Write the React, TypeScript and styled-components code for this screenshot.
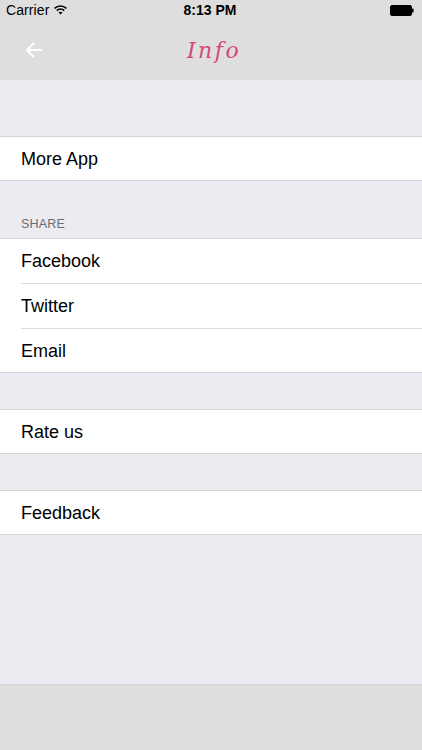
import React from "react";
import styled, { createGlobalStyle } from "styled-components";

const Global = createGlobalStyle`
  html, body { margin: 0; padding: 0; }
  body { font-family: "Liberation Sans", Arial, sans-serif; background: #ebebf1; }
  * { box-sizing: border-box; }
`;

const Screen = styled.div`
  width: 422px;
  height: 750px;
  display: flex;
  flex-direction: column;
  background: #ebebf1;
  overflow: hidden;
`;

const Header = styled.div`
  background: #dedede;
  display: flex;
  flex-direction: column;
`;

const StatusBar = styled.div`
  height: 20px;
  display: grid;
  grid-template-columns: 1fr auto 1fr;
  align-items: center;
  padding: 0 8px 0 6px;
  font-size: 14px;
  color: #000;
`;

const StatusLeft = styled.div`
  display: flex;
  align-items: center;
  gap: 5px;
  letter-spacing: 0.1px;
`;

const Time = styled.div`
  font-weight: bold;
  font-size: 14px;
`;

const StatusRight = styled.div`
  display: flex;
  justify-content: flex-end;
  align-items: center;
`;

const NavBar = styled.div`
  height: 60px;
  display: grid;
  grid-template-columns: 60px 1fr 60px;
  align-items: center;
`;

const BackButton = styled.div`
  display: flex;
  align-items: center;
  padding-left: 25px;
  height: 100%;
`;

const Title = styled.div`
  text-align: center;
  font-family: "DejaVu Serif", "Liberation Serif", serif;
  font-style: italic;
  font-size: 22px;
  letter-spacing: 2.5px;
  color: #d8477c;
  padding-left: 6px;
  padding-top: 1px;
`;

const Content = styled.div`
  flex: 1;
  display: flex;
  flex-direction: column;
`;

const Spacer = styled.div<{ $h: number }>`
  height: ${(p) => p.$h}px;
`;

const SectionHeader = styled.div`
  height: 57px;
  display: flex;
  align-items: flex-end;
  padding: 0 0 7px 21px;
  font-size: 12.5px;
  color: #6d6d72;
  letter-spacing: 0.2px;
`;

const Group = styled.div`
  background: #fff;
  border-top: 1px solid #d6d6da;
  border-bottom: 1px solid #d6d6da;
`;

const Row = styled.div`
  padding-left: 21px;
  background: #fff;
`;

const RowInner = styled.div<{ $divider?: boolean }>`
  height: ${(p) => (p.$divider ? 45 : 43)}px;
  display: flex;
  align-items: center;
  padding-top: ${(p) => (p.$divider ? 0 : 1)}px;
  font-size: 18px;
  color: #000;
  border-bottom: ${(p) => (p.$divider ? "1px solid #dcdce0" : "none")};
`;

const BottomBar = styled.div`
  height: 66px;
  background: #dedede;
  border-top: 1px solid #d8d8d8;
`;

const Wifi = () => (
  <svg width="13" height="10" viewBox="0 0 13 10">
    <path d="M0.6 3.4 A8.5 8.5 0 0 1 12.4 3.4" stroke="#000" strokeWidth="1.7" fill="none" />
    <path d="M2.8 5.6 A5.4 5.4 0 0 1 10.2 5.6" stroke="#000" strokeWidth="1.7" fill="none" />
    <path d="M6.5 9.6 L4.5 7.6 A2.9 2.9 0 0 1 8.5 7.6 Z" fill="#000" />
  </svg>
);

const Battery = () => (
  <svg width="24" height="11" viewBox="0 0 24 11">
    <rect x="0.5" y="0.5" width="21" height="10" rx="1.5" fill="#000" stroke="#000" />
    <rect x="22" y="3.5" width="1.6" height="4" rx="0.5" fill="#000" />
  </svg>
);

const BackArrow = () => (
  <svg width="17" height="16" viewBox="0 0 17 16">
    <path d="M16 8 H2 M8.5 1.5 L2 8 L8.5 14.5" stroke="#fff" strokeWidth="2" fill="none" strokeLinecap="round" strokeLinejoin="round" />
  </svg>
);

const Item = ({ label, divider }: { label: string; divider?: boolean }) => (
  <Row>
    <RowInner $divider={divider}>{label}</RowInner>
  </Row>
);

export default function App() {
  return (
    <>
      <Global />
      <Screen>
        <Header>
          <StatusBar>
            <StatusLeft>
              <span>Carrier</span>
              <Wifi />
            </StatusLeft>
            <Time>8:13 PM</Time>
            <StatusRight>
              <Battery />
            </StatusRight>
          </StatusBar>
          <NavBar>
            <BackButton>
              <BackArrow />
            </BackButton>
            <Title>Info</Title>
            <div />
          </NavBar>
        </Header>
        <Content>
          <Spacer $h={56} />
          <Group>
            <Item label="More App" />
          </Group>
          <SectionHeader>SHARE</SectionHeader>
          <Group>
            <Item label="Facebook" divider />
            <Item label="Twitter" divider />
            <Item label="Email" />
          </Group>
          <Spacer $h={36} />
          <Group>
            <Item label="Rate us" />
          </Group>
          <Spacer $h={36} />
          <Group>
            <Item label="Feedback" />
          </Group>
        </Content>
        <BottomBar />
      </Screen>
    </>
  );
}
